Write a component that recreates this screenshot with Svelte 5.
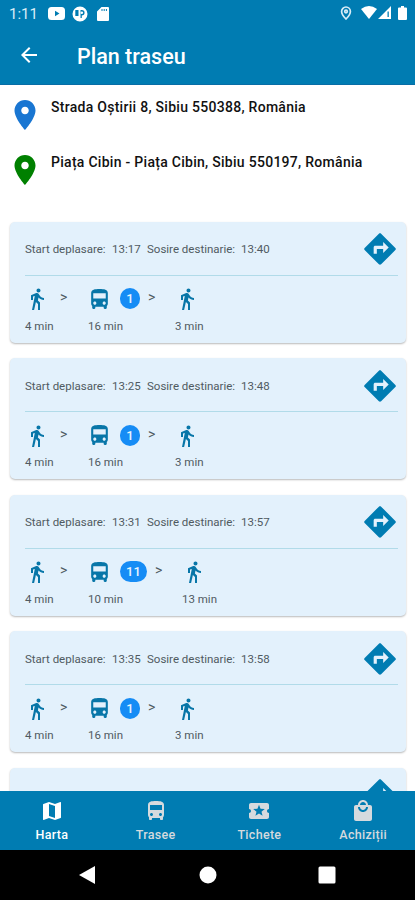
<script lang="ts">
  interface Trip {
    start: string;
    arrival: string;
    line: string;
    walk: string;
    ride: string;
    walkEnd: string;
  }

  const trips: Trip[] = [
    { start: "13:17", arrival: "13:40", line: "1", walk: "4 min", ride: "16 min", walkEnd: "3 min" },
    { start: "13:25", arrival: "13:48", line: "1", walk: "4 min", ride: "16 min", walkEnd: "3 min" },
    { start: "13:31", arrival: "13:57", line: "11", walk: "4 min", ride: "10 min", walkEnd: "13 min" },
    { start: "13:35", arrival: "13:58", line: "1", walk: "4 min", ride: "16 min", walkEnd: "3 min" },
  ];

  const icons = {
    pin: "M12 2C8.13 2 5 5.13 5 9c0 5.25 7 13 7 13s7-7.75 7-13c0-3.87-3.13-7-7-7zm0 9.5c-1.38 0-2.5-1.12-2.5-2.5s1.12-2.5 2.5-2.5 2.5 1.12 2.5 2.5-1.12 2.5-2.5 2.5z",
    back: "M20 11H7.83l5.59-5.59L12 4l-8 8 8 8 1.41-1.41L7.83 13H20v-2z",
    walk: "M13.5 5.5c1.1 0 2-.9 2-2s-.9-2-2-2-2 .9-2 2 .9 2 2 2zM9.8 8.9L7 23h2.1l1.8-8 2.1 2v6h2v-7.5l-2.1-2 .6-3C14.8 12 16.8 13 19 13v-2c-1.9 0-3.5-1-4.3-2.4l-1-1.6c-.4-.6-1-1-1.7-1-.3 0-.5.1-.8.1L6 8.3V13h2V9.6l1.8-.7",
    bus: "M4 16c0 .88.39 1.67 1 2.22V20c0 .55.45 1 1 1h1c.55 0 1-.45 1-1v-1h8v1c0 .55.45 1 1 1h1c.55 0 1-.45 1-1v-1.78c.61-.55 1-1.34 1-2.22V6c0-3.5-3.58-4-8-4s-8 .5-8 4v10zm3.5 1c-.83 0-1.5-.67-1.5-1.5S6.67 14 7.5 14s1.5.67 1.5 1.5S8.33 17 7.5 17zm9 0c-.83 0-1.5-.67-1.5-1.5s.67-1.5 1.5-1.5 1.5.67 1.5 1.5-.67 1.5-1.5 1.5zm1.5-6H6V6h12v5z",
    directions: "M21.71 11.29l-9-9c-.39-.39-1.02-.39-1.41 0l-9 9c-.39.39-.39 1.02 0 1.41l9 9c.39.39 1.02.39 1.41 0l9-9c.39-.38.39-1.01 0-1.41zM14 14.5V12h-4v3H8v-4c0-.55.45-1 1-1h5V7.5l3.5 3.5-3.5 3.5z",
    map: "M20.5 3l-.16.03L15 5.1 9 3 3.36 4.9c-.21.07-.36.25-.36.48V20.5c0 .28.22.5.5.5l.16-.03L9 18.9l6 2.1 5.64-1.9c.21-.07.36-.25.36-.48V3.5c0-.28-.22-.5-.5-.5zM15 19l-6-2.11V5l6 2.11V19z",
    ticket: "M20 12c0-1.1.9-2 2-2V6c0-1.1-.9-2-2-2H4c-1.1 0-1.99.9-1.99 2v4c1.1 0 1.99.9 1.99 2s-.89 2-2 2v4c0 1.1.9 2 2 2h16c1.1 0 2-.9 2-2v-4c-1.1 0-2-.9-2-2zm-4.42 4.8L12 14.5l-3.58 2.3 1.08-4.12-3.29-2.69 4.24-.25L12 5.8l1.54 3.95 4.24.25-3.29 2.69 1.09 4.11z",
    bag: "M19 6h-2c0-2.76-2.24-5-5-5S7 3.24 7 6H5c-1.1 0-1.99.9-1.99 2L3 20c0 1.1.9 2 2 2h14c1.1 0 2-.9 2-2V8c0-1.1-.9-2-2-2zm-7-3c1.66 0 3 1.34 3 3H9c0-1.66 1.34-3 3-3zm0 10c-2.76 0-5-2.24-5-5h2c0 1.66 1.34 3 3 3s3-1.34 3-3h2c0 2.76-2.24 5-5 5z",
  };

  const tabs = [
    { label: "Harta", icon: icons.map },
    { label: "Trasee", icon: icons.bus },
    { label: "Tichete", icon: icons.ticket },
    { label: "Achiziții", icon: icons.bag },
  ];

  let active = $state("Harta");
</script>

{#snippet icon(path: string)}
  <svg class="icon" viewBox="0 0 24 24"><path d={path} /></svg>
{/snippet}

<div class="phone">
  <header>
    <div class="status">
      <span class="clock">1:11</span>
      <svg class="youtube" viewBox="0 0 17 13"><path fill-rule="evenodd" d="M3.5 0h10q3.500 0 3.500 3.500v6q0 3.500-3.500 3.500h-10Q0 13 0 9.500v-6Q0 0 3.500 0zm3.500 3.800v5.400l4.500-2.700z" /></svg>
      <svg class="round" viewBox="0 0 16 16"><path fill-rule="evenodd" d="M8 .5a7.500 7.500 0 1 1 0 15a7.500 7.500 0 0 1 0-15zM3.300 4v6h3.200V4zM8.500 4v8h1.300V9.500a2.700 2.700 0 0 0 0-5.500z" /><circle cx="9.800" cy="6.700" r="1.300" /></svg>
      <svg class="sdcard" viewBox="0 0 12 14"><path fill-rule="evenodd" d="M4.500 0H11q1 0 1 1v12q0 1-1 1H1q-1 0-1-1V4.500zM4.500 2v2h1V2zm2.200 0v2h1V2zm2.200 0v2h1V2z" /></svg>
      <span class="spacer"></span>
      <svg class="location" viewBox="0 0 12 14"><path d="M6 1a4.400 4.400 0 0 1 4.400 4.400C10.400 8.500 6 13 6 13S1.600 8.500 1.600 5.400A4.400 4.400 0 0 1 6 1z" /><circle cx="6" cy="5.500" r="1.300" /></svg>
      <svg class="wifi" viewBox="0 0 16 13"><path d="M0 3q8-6 16 0L8 13z" /></svg>
      <svg class="signal" viewBox="0 0 13 13"><path fill-rule="evenodd" d="M13 0v13H0zM9.500 5.500v5.500h1.300V5.500z" /></svg>
      <svg class="battery" viewBox="0 0 9 14"><path d="M3 0h3v1.500h2q1 0 1 1V13q0 1-1 1H1q-1 0-1-1V2.500q0-1 1-1h2z" /></svg>
    </div>
    <div class="appbar">
      <button class="back" aria-label="Înapoi">{@render icon(icons.back)}</button>
      <h1>Plan traseu</h1>
    </div>
  </header>

  <main>
    <div class="places">
      <div class="place from">
        {@render icon(icons.pin)}
        <span>Strada Oștirii 8, Sibiu 550388, România</span>
      </div>
      <div class="place to">
        {@render icon(icons.pin)}
        <span>Piața Cibin - Piața Cibin, Sibiu 550197, România</span>
      </div>
    </div>

    <div class="trips">
      {#each trips as trip}
        <article>
          <div class="times">
            <span class="start">Start deplasare:</span>
            <span class="hour">{trip.start}</span>
            <span class="end">Sosire destinarie:</span>
            <span class="hour">{trip.arrival}</span>
            <span class="go">{@render icon(icons.directions)}</span>
          </div>
          <div class="legs">
            <div class="leg first">
              <div class="leg-icons">{@render icon(icons.walk)}<span class="arrow">&gt;</span></div>
              <span class="duration">{trip.walk}</span>
            </div>
            <div class="leg ride">
              <div class="leg-icons">
                {@render icon(icons.bus)}
                <span class="line" class:wide={trip.line.length > 1}>{trip.line}</span>
                <span class="arrow">&gt;</span>
              </div>
              <span class="duration">{trip.ride}</span>
            </div>
            <div class="leg">
              <div class="leg-icons">{@render icon(icons.walk)}</div>
              <span class="duration">{trip.walkEnd}</span>
            </div>
          </div>
        </article>
      {/each}
      <article>
        <div class="times"><span class="go">{@render icon(icons.directions)}</span></div>
      </article>
    </div>
  </main>

  <nav>
    {#each tabs as tab}
      <button class="tab" class:active={active === tab.label} onclick={() => (active = tab.label)}>
        {@render icon(tab.icon)}
        <span>{tab.label}</span>
      </button>
    {/each}
  </nav>

  <footer>
    <svg viewBox="0 0 18 18"><path d="M16 0v18L0 9z" /></svg>
    <svg viewBox="0 0 18 18"><circle cx="9" cy="9" r="8.500" /></svg>
    <svg viewBox="0 0 18 18"><rect x=".5" y=".5" width="17" height="17" rx="1.500" /></svg>
  </footer>
</div>

<style>
  :global(body) { margin: 0; }
  .phone {
    display: flex;
    flex-direction: column;
    width: 415px;
    height: 900px;
    overflow: hidden;
    background: #fff;
    font-family: Roboto, "Noto Sans", sans-serif;
  }
  svg { display: block; flex-shrink: 0; fill: currentColor; }
  .icon { width: 24px; height: 24px; }
  button { padding: 0; border: none; background: none; font: inherit; color: inherit; }

  header {
    flex: 0 0 85px;
    box-sizing: border-box;
    border-bottom: 1px solid #086da6;
    background: #007cb2;
    color: #fff;
  }
  .status {
    display: flex;
    align-items: center;
    height: 27px;
    padding: 0 7px 0 9px;
  }
  .clock { width: 39px; font-size: 15px; color: #d9edf7; }
  .youtube { width: 17px; height: 13px; }
  .round { width: 16px; height: 16px; margin-left: 7px; }
  .sdcard { width: 12px; height: 14px; margin-left: 9px; }
  .spacer { flex: 1; }
  .location { width: 12px; height: 14px; margin-right: 9px; fill: none; stroke: #d9edf7; stroke-width: 1.7; }
  .wifi { width: 16px; height: 13px; }
  .signal { width: 13px; height: 13px; margin-left: 1px; }
  .battery { width: 9px; height: 14px; margin-left: 7px; }
  .location, .wifi, .signal, .battery { position: relative; left: -1px; top: -1px; }
  .appbar {
    display: flex;
    align-items: center;
    height: 56px;
    padding-left: 17px;
  }
  .back { width: 25px; }
  h1 {
    margin: 3px 0 0 35px;
    font-size: 21.5px;
    font-weight: 500;
  }

  main { flex: 1; min-height: 0; overflow: hidden; }
  .places { padding: 11px 0 0 7px; }
  .place {
    display: flex;
    height: 54.5px;
    color: #111;
    font-size: 14px;
    font-weight: 500;
    letter-spacing: 0.28px;
  }
  .place .icon { width: 36px; height: 38px; }
  .place span { margin: 3px 0 0 8px; line-height: 16px; white-space: nowrap; }
  .from .icon { color: #1976d2; }
  .to .icon { color: #008000; }

  .trips {
    display: flex;
    flex-direction: column;
    gap: 15.6px;
    padding: 16.5px 9px 0 10px;
  }
  article {
    flex: 0 0 121px;
    box-sizing: border-box;
    height: 121px;
    padding: 0 8px 0 15px;
    border-radius: 5px;
    background: #e3f1fc;
    box-shadow: 0 1px 2px rgba(0, 0, 0, 0.28);
    color: #505a61;
    font-size: 11.5px;
  }
  .times {
    display: flex;
    align-items: center;
    box-sizing: border-box;
    height: 54px;
    padding-top: 2px;
    margin-bottom: 9px;
    border-bottom: 1px solid #b1dbe9;
    white-space: nowrap;
  }
  .start { width: 87px; }
  .hour { width: 35px; }
  .end { width: 94px; }
  .go { margin: 0 -1px 0 auto; color: #007cb2; }
  .go .icon, .go :global(.icon) { width: 38px; height: 38px; }
  .legs { display: flex; }
  .first { width: 63px; }
  .leg-icons { display: flex; align-items: center; height: 29px; color: #0876a8; }
  .ride { margin-right: 19px; }
  .ride .icon { width: 25px; height: 25px; margin-left: -1px; }
  .arrow { width: 8px; margin: -4px 0 0 11px; font-size: 14px; color: #505a61; }
  .ride .arrow { margin-left: 8px; }
  .line {
    width: 20px;
    height: 21px;
    margin: -1px 0 0 8px;
    border-radius: 11px;
    background: #168cf5;
    color: #e8f4ff;
    font-size: 13px;
    font-weight: 500;
    line-height: 22px;
    text-align: center;
  }
  .line.wide { width: 27px; margin-right: 1px; }
  .line.wide + .arrow { margin-left: 7px; }
  .duration { display: block; margin-top: 4px; line-height: 16px; }

  nav {
    display: flex;
    flex: 0 0 59px;
    background: #007cb2;
    color: #d5dade;
  }
  .tab {
    display: flex;
    flex: 1;
    flex-direction: column;
    align-items: center;
    padding-top: 8px;
    font-size: 12.5px;
    font-weight: 500;
    letter-spacing: 0.3px;
  }
  .tab span { margin-top: 4px; line-height: 16px; }
  .tab.active { color: #fff; }
  footer {
    display: flex;
    flex: 0 0 50px;
    align-items: center;
    justify-content: space-between;
    box-sizing: border-box;
    padding: 0 79px;
    background: #000;
    color: #fff;
  }
  footer svg { width: 18px; height: 18px; }
</style>
